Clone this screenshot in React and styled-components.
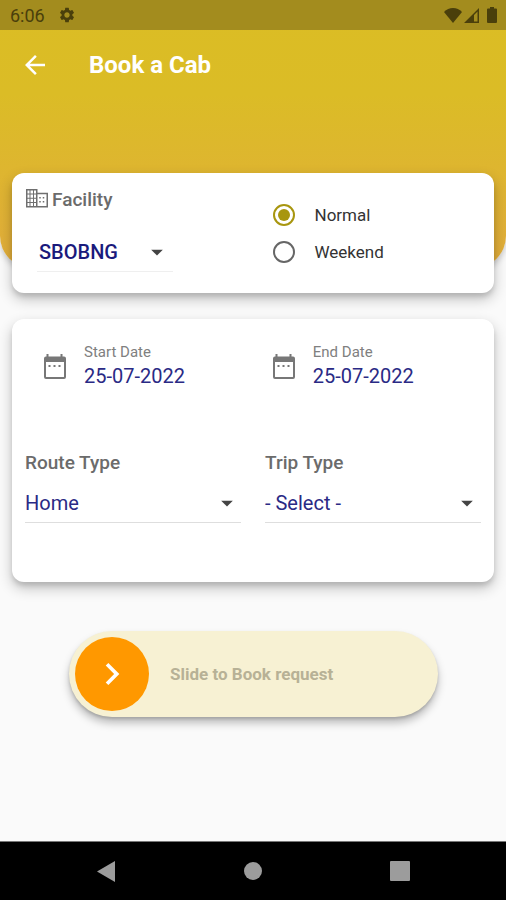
import React from "react";
import styled, { createGlobalStyle } from "styled-components";
import {
  MdArrowBack,
  MdArrowDropDown,
  MdChevronRight,
  MdSettings
} from "react-icons/md";

const GlobalStyle = createGlobalStyle`
  * {
    box-sizing: border-box;
  }
  body {
    margin: 0;
    background: #fafafa;
    font-family: Roboto, "Liberation Sans", sans-serif;
  }
  button, input, select {
    font-family: inherit;
    margin: 0;
    padding: 0;
    border: none;
    background: none;
  }
`;

const Page = styled.div`
  min-height: 100vh;
  display: flex;
  flex-direction: column;
`;

const Header = styled.header`
  height: 268px;
  flex-shrink: 0;
  border-radius: 0 0 32px 32px;
  box-shadow: 0 3px 6px rgba(0, 0, 0, 0.2);
  overflow: hidden;
  background: linear-gradient(#dbbd24 0%, #dbbc26 35%, #e2ad3c 100%);
`;

const StatusBar = styled.div`
  height: 30px;
  padding: 0 9px 0 10px;
  display: flex;
  align-items: center;
  justify-content: space-between;
  background: #a38c1e;
  color: #4a3f0b;
  font-size: 18px;
`;

const StatusGroup = styled.div`
  display: flex;
  align-items: center;
  gap: ${props => props.$gap};
`;

const AppBar = styled.div`
  height: 70px;
  padding: 0 20px;
  display: flex;
  align-items: center;
  gap: 39px;
  color: #fff;
  h1 {
    margin: 0;
    font-size: 24px;
    font-weight: 700;
  }
`;

const IconButton = styled.button`
  display: flex;
  align-items: center;
  justify-content: center;
  color: inherit;
  cursor: pointer;
`;

const Content = styled.main`
  flex: 1;
  margin-top: -95px;
  padding: 0 12px 40px;
  display: flex;
  flex-direction: column;
  gap: 26px;
`;

const Card = styled.section`
  padding: ${props => props.$padding};
  border-radius: 12px;
  background: #fff;
  box-shadow: 0 6px 14px rgba(0, 0, 0, 0.24), 0 4px 4px rgba(0, 0, 0, 0.1);
`;

const Columns = styled.div`
  display: grid;
  grid-template-columns: 1fr 1fr;
  gap: 24px;
`;

const FieldLabel = styled.label`
  display: flex;
  align-items: center;
  gap: 4px;
  height: ${props => props.$height};
  color: #6b6b6b;
  font-size: 19px;
  font-weight: 500;
`;

//the arrow shares the grid cell with the select
const SelectBox = styled.div`
  display: grid;
  align-items: center;
  height: 40px;
  border-bottom: 1px solid ${props => (props.$compact ? "#efefef" : "#dedede")};
  width: ${props => (props.$compact ? "136px" : "100%")};
  margin: ${props => (props.$compact ? "19px 0 0 11px" : "9px 0 0")};
  padding: ${props => (props.$compact ? "0 2px" : "0")};

  select {
    grid-area: 1 / 1;
    width: 100%;
    height: 39px;
    appearance: none;
    color: ${props => (props.$compact ? "#1a1a7c" : "#2a2a85")};
    font-size: 20px;
    font-weight: ${props => (props.$compact ? 500 : 400)};
  }
  svg {
    grid-area: 1 / 1;
    justify-self: end;
    pointer-events: none;
    color: #444;
  }
`;

const RadioGroup = styled.div`
  align-self: center;
  padding: 10px 0 0 7px;
`;

const RadioRow = styled.label`
  height: 37px;
  display: flex;
  align-items: center;
  gap: 20px;
  color: #333;
  font-size: 17px;

  input {
    appearance: none;
    width: 22px;
    height: 22px;
    border: 2px solid #666;
    border-radius: 50%;
    display: grid;
    place-items: center;
  }
  input:checked {
    border-color: #a8960f;
  }
  input:checked::before {
    content: "";
    width: 12px;
    height: 12px;
    border-radius: 50%;
    background: #a8960f;
  }
`;

const DateRow = styled.div`
  display: grid;
  grid-template-columns: 13fr 12fr;
  padding-left: 16px;
  margin-bottom: 60px;
`;

const DateField = styled.div`
  display: flex;
  align-items: center;
  gap: 15px;
  svg {
    flex-shrink: 0;
  }
  label {
    display: block;
    color: #808080;
    font-size: 15px;
    line-height: 20px;
  }
  input {
    display: block;
    width: 100%;
    height: 28px;
    color: #2a2a85;
    font-size: 20px;
  }
`;

const Slider = styled.div`
  height: 86px;
  margin: 23px 56px 0 57px;
  padding: 0 6px;
  display: grid;
  align-items: center;
  border-radius: 43px;
  background: #f7f1d3;
  box-shadow: 0 6px 8px rgba(0, 0, 0, 0.25), 0 2px 3px rgba(0, 0, 0, 0.15);

  label {
    grid-area: 1 / 1;
    padding-left: 95px;
    color: #b7b196;
    font-size: 17px;
    font-weight: 700;
  }
  input {
    grid-area: 1 / 1;
    width: 100%;
    height: 74px;
    appearance: none;
    cursor: pointer;
  }
  input::-webkit-slider-thumb {
    appearance: none;
    width: 74px;
    height: 74px;
    border-radius: 50%;
    background: #ff9800;
  }
`;

const Arrow = styled.div`
  grid-area: 1 / 1;
  width: 74px;
  display: flex;
  justify-content: center;
  position: relative;
  pointer-events: none;
  color: #fff;
`;

const NavBar = styled.nav`
  height: 59px;
  padding: 0 33px;
  display: grid;
  grid-template-columns: repeat(3, 1fr);
  border-top: 1px solid #777;
  background: #000;
  color: #9c9c9c;
`;

const WifiIcon = () => (
  <svg width="18" height="15" viewBox="0 0 18 15" fill="currentColor">
    <path d="M9 15 0 4C2.500 1.500 5.500 0 9 0s6.500 1.500 9 4z" />
  </svg>
);

const SignalIcon = () => (
  <svg width="15" height="15" viewBox="0 0 15 15" fill="currentColor">
    <path fillRule="evenodd" d="M0 15 15 0v15zM10 7v6.500h3.500V3.500z" />
  </svg>
);

const BatteryIcon = () => (
  <svg width="10" height="16" viewBox="0 0 10 16" fill="currentColor">
    <path d="M3 0h4v1.500h2a1 1 0 0 1 1 1V15a1 1 0 0 1-1 1H1a1 1 0 0 1-1-1V2.500a1 1 0 0 1 1-1h2z" />
  </svg>
);

const BuildingIcon = () => (
  <svg width="22" height="20" viewBox="0 0 22 20" fill="none" stroke="#6f6f6f">
    <path strokeWidth="1.500" d="M.75.75h10v17h-10zM10.750 4.500h10.500v13.250h-10.500" />
    <path d="M4 1v17M7.500 1v17M1 5h9.500M1 9.250h9.500M1 13.500h9.500" />
    <path strokeWidth="1.500" strokeDasharray="1.500 2.500" d="M14 8v8M17.500 8v8" />
  </svg>
);

const CalendarIcon = () => (
  <svg width="28" height="28" viewBox="0 0 28 28" fill="#777">
    <path
      fillRule="evenodd"
      d="M5.500 2h2v2.500h12V2h2v2.500h1.500a2 2 0 0 1 2 2V25a2 2 0 0 1-2 2H5a2 2 0 0 1-2-2V6.500a2 2 0 0 1 2-2h.5zM5 10v14.500q0 .5.500.5h17q.5 0 .5-.5V10z"
    />
    <path d="M7.500 13h2v2h-2zM12.500 13h2v2h-2zM17.500 13h2v2h-2z" />
  </svg>
);

class App extends React.Component {
  state = {
    facility: "SBOBNG",
    shift: "Normal",
    startDate: "25-07-2022",
    endDate: "25-07-2022",
    route: "Home",
    trip: "",
    slide: 0
  };

  onChange = e => {
    this.setState({ [e.target.name]: e.target.value });
  };

  //snap back when it was not slid to the end
  onRelease = () => {
    if (Number(this.state.slide) < 100) this.setState({ slide: 0 });
  };

  renderDate(name, label) {
    return (
      <DateField>
        <CalendarIcon />
        <div>
          <label htmlFor={name}>{label}</label>
          <input
            id={name}
            name={name}
            type="text"
            value={this.state[name]}
            onChange={this.onChange}
          />
        </div>
      </DateField>
    );
  }

  render() {
    const { facility, shift, route, trip, slide } = this.state;
    return (
      <Page>
        <GlobalStyle />
        <Header>
          <StatusBar>
            <StatusGroup $gap="13px">
              <span>6:06</span>
              <MdSettings size={18} />
            </StatusGroup>
            <StatusGroup $gap="8px">
              <StatusGroup $gap="2px">
                <WifiIcon />
                <SignalIcon />
              </StatusGroup>
              <BatteryIcon />
            </StatusGroup>
          </StatusBar>
          <AppBar>
            <IconButton aria-label="Back">
              <MdArrowBack size={30} />
            </IconButton>
            <h1>Book a Cab</h1>
          </AppBar>
        </Header>

        <Content>
          <Card $padding="12px 13px 21px 14px">
            <Columns>
              <div>
                <FieldLabel htmlFor="facility" $height="28px">
                  <BuildingIcon />
                  Facility
                </FieldLabel>
                <SelectBox $compact>
                  <select
                    id="facility"
                    name="facility"
                    value={facility}
                    onChange={this.onChange}
                  >
                    <option>SBOBNG</option>
                  </select>
                  <MdArrowDropDown size={28} />
                </SelectBox>
              </div>
              <RadioGroup>
                {["Normal", "Weekend"].map(name => (
                  <RadioRow key={name}>
                    <input
                      type="radio"
                      name="shift"
                      value={name}
                      checked={shift === name}
                      onChange={this.onChange}
                    />
                    {name}
                  </RadioRow>
                ))}
              </RadioGroup>
            </Columns>
          </Card>

          <Card $padding="23px 13px 59px">
            <DateRow>
              {this.renderDate("startDate", "Start Date")}
              {this.renderDate("endDate", "End Date")}
            </DateRow>
            <Columns>
              <div>
                <FieldLabel htmlFor="route" $height="24px">
                  Route Type
                </FieldLabel>
                <SelectBox>
                  <select
                    id="route"
                    name="route"
                    value={route}
                    onChange={this.onChange}
                  >
                    <option>Home</option>
                  </select>
                  <MdArrowDropDown size={28} />
                </SelectBox>
              </div>
              <div>
                <FieldLabel htmlFor="trip" $height="24px">
                  Trip Type
                </FieldLabel>
                <SelectBox>
                  <select
                    id="trip"
                    name="trip"
                    value={trip}
                    onChange={this.onChange}
                  >
                    <option value="">- Select -</option>
                  </select>
                  <MdArrowDropDown size={28} />
                </SelectBox>
              </div>
            </Columns>
          </Card>

          <Slider>
            <label htmlFor="slide">Slide to Book request</label>
            <input
              id="slide"
              name="slide"
              type="range"
              min="0"
              max="100"
              value={slide}
              onChange={this.onChange}
              onPointerUp={this.onRelease}
            />
            <Arrow style={{ left: `calc((100% - 74px) * ${slide / 100})` }}>
              <MdChevronRight size={44} />
            </Arrow>
          </Slider>
        </Content>

        <NavBar>
          <IconButton aria-label="System back">
            <svg width="18" height="21" viewBox="0 0 18 21" fill="currentColor">
              <path d="M18 0v21L0 10.500z" />
            </svg>
          </IconButton>
          <IconButton aria-label="System home">
            <svg width="18" height="18" viewBox="0 0 18 18" fill="currentColor">
              <circle cx="9" cy="9" r="9" />
            </svg>
          </IconButton>
          <IconButton aria-label="Recent apps">
            <svg width="20" height="20" viewBox="0 0 20 20" fill="currentColor">
              <rect width="20" height="20" rx="1" />
            </svg>
          </IconButton>
        </NavBar>
      </Page>
    );
  }
}

export default App;
